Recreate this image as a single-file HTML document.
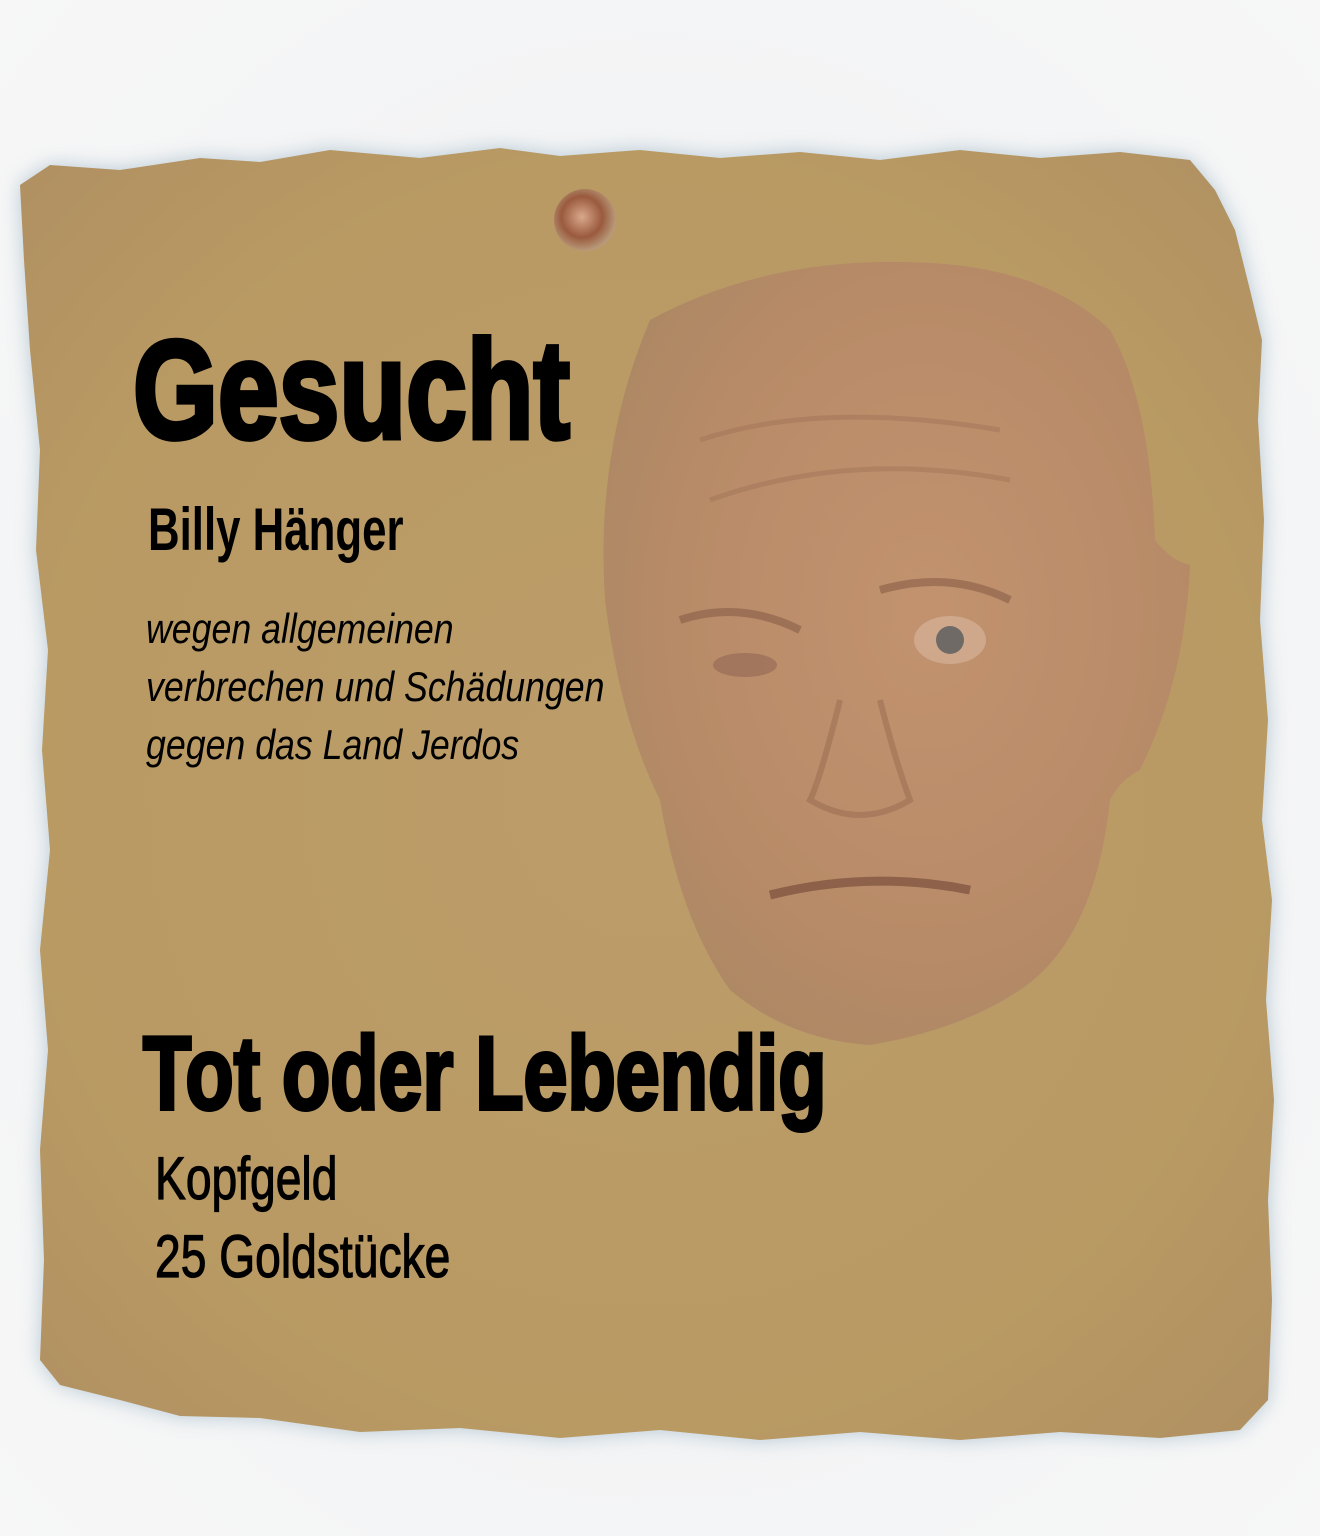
<!DOCTYPE html>
<html><head><meta charset="utf-8">
<style>
html,body{margin:0;padding:0;}
body{width:1320px;height:1536px;position:relative;overflow:hidden;
background:radial-gradient(ellipse at 50% 50%,#e9ecee 0%,#f3f4f5 60%,#f7f7f7 100%);
font-family:"Liberation Sans",sans-serif;color:#000;}
.t{position:absolute;white-space:nowrap;transform-origin:0 0;line-height:1;}
</style></head><body>
<svg width="1320" height="1536" style="position:absolute;left:0;top:0">
<defs>
<filter id="sh" x="-5%" y="-5%" width="110%" height="110%">
<feGaussianBlur stdDeviation="10"/>
</filter>
<radialGradient id="paper" cx="50%" cy="50%" r="70%">
<stop offset="0" stop-color="#bc9d6a"/><stop offset="0.7" stop-color="#b99a63"/><stop offset="1" stop-color="#b09062"/>
</radialGradient>
<radialGradient id="skin" cx="55%" cy="45%" r="60%">
<stop offset="0" stop-color="#c3926f"/><stop offset="0.7" stop-color="#b88a68"/><stop offset="1" stop-color="#ad8764"/>
</radialGradient>
<radialGradient id="pin" cx="45%" cy="45%" r="55%">
<stop offset="0" stop-color="#d9a88c"/><stop offset="0.6" stop-color="#9a5a3e"/><stop offset="1" stop-color="#b89a7a"/>
</radialGradient>
</defs>
<path d="M20 185 L50 165 L120 170 L200 158 L260 162 L330 150 L420 158 L500 148 L560 156 L640 150 L720 158 L800 152 L880 160 L960 150 L1040 158 L1120 152 L1190 160 L1215 190 L1235 230 L1250 290 L1262 340 L1258 420 L1264 520 L1260 620 L1268 720 L1262 820 L1272 900 L1266 1000 L1274 1100 L1268 1200 L1272 1300 L1268 1400 L1240 1430 L1160 1438 L1060 1432 L960 1440 L860 1432 L760 1440 L660 1430 L560 1438 L460 1428 L360 1432 L260 1418 L180 1416 L120 1400 L60 1385 L40 1360 L44 1260 L40 1150 L48 1050 L40 950 L50 850 L42 750 L48 650 L36 550 L40 450 L30 350 L24 260 Z" fill="#9cb6c6" filter="url(#sh)" opacity="0.7"/>
<path d="M20 185 L50 165 L120 170 L200 158 L260 162 L330 150 L420 158 L500 148 L560 156 L640 150 L720 158 L800 152 L880 160 L960 150 L1040 158 L1120 152 L1190 160 L1215 190 L1235 230 L1250 290 L1262 340 L1258 420 L1264 520 L1260 620 L1268 720 L1262 820 L1272 900 L1266 1000 L1274 1100 L1268 1200 L1272 1300 L1268 1400 L1240 1430 L1160 1438 L1060 1432 L960 1440 L860 1432 L760 1440 L660 1430 L560 1438 L460 1428 L360 1432 L260 1418 L180 1416 L120 1400 L60 1385 L40 1360 L44 1260 L40 1150 L48 1050 L40 950 L50 850 L42 750 L48 650 L36 550 L40 450 L30 350 L24 260 Z" fill="url(#paper)"/>
<circle cx="585" cy="220" r="31" fill="url(#pin)"/>
<path d="M650 320 Q760 260 900 262 Q1040 262 1110 330 Q1150 400 1155 540 Q1170 560 1190 565 Q1185 680 1140 770 Q1120 780 1110 800 Q1095 940 1020 990 Q960 1030 870 1045 Q790 1040 730 990 Q680 920 660 800 Q620 720 605 600 Q595 450 650 320 Z" fill="url(#skin)" opacity="0.95"/>
<path d="M700 440 Q820 400 1000 430" stroke="#9c6e55" stroke-width="5" fill="none" opacity="0.4"/>
<path d="M710 500 Q850 450 1010 480" stroke="#9c6e55" stroke-width="5" fill="none" opacity="0.4"/>
<path d="M680 620 Q740 600 800 630" stroke="#7d5340" stroke-width="8" fill="none" opacity="0.5"/>
<path d="M880 590 Q950 570 1010 600" stroke="#7d5340" stroke-width="8" fill="none" opacity="0.5"/>
<ellipse cx="745" cy="665" rx="32" ry="12" fill="#8a6050" opacity="0.5"/>
<ellipse cx="950" cy="640" rx="36" ry="24" fill="#d8b8a0" opacity="0.6"/>
<circle cx="950" cy="640" r="14" fill="#6f6a66"/>
<path d="M840 700 Q820 780 810 800 Q860 830 910 800 Q895 760 880 700" stroke="#8e624c" stroke-width="6" fill="none" opacity="0.4"/>
<path d="M770 895 Q870 870 970 890" stroke="#6f4535" stroke-width="9" fill="none" opacity="0.6"/>
</svg>
<div class="t" style="left:133px;top:320px;font-size:140px;font-weight:bold;-webkit-text-stroke:5px #000;transform:scaleX(0.78)">Gesucht</div>
<div class="t" style="left:148px;top:500px;font-size:60px;font-weight:bold;transform:scaleX(0.73)">Billy Hänger</div>
<div class="t" style="left:146px;top:600px;font-size:42px;font-style:italic;transform:scaleX(0.85);line-height:58px">wegen allgemeinen<br>verbrechen und Schädungen<br>gegen das Land Jerdos</div>
<div class="t" style="left:143px;top:1022px;font-size:104px;font-weight:bold;-webkit-text-stroke:4px #000;transform:scaleX(0.76)">Tot oder Lebendig</div>
<div class="t" style="left:155px;top:1140px;font-size:60px;-webkit-text-stroke:1.2px #000;transform:scaleX(0.77);line-height:78px">Kopfgeld<br>25 Goldstücke</div>
</body></html>
